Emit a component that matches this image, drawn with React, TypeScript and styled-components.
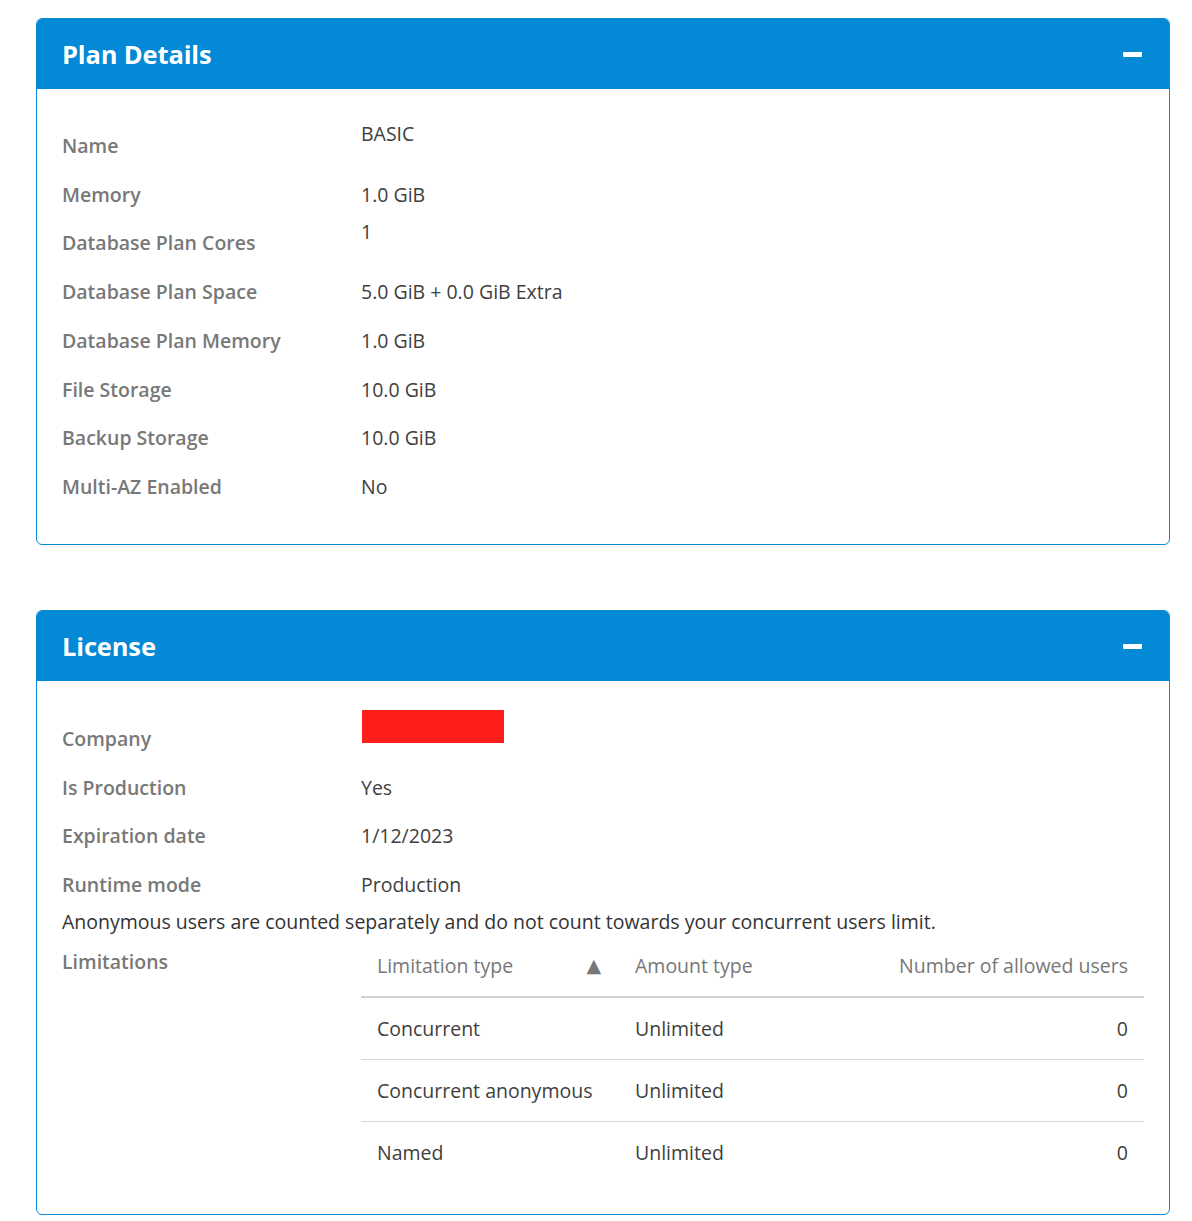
import React from "react";
import styled, { createGlobalStyle } from "styled-components";

const Global = createGlobalStyle`
  html, body { margin: 0; padding: 0; background: #fff; }
  body { font-family: "Open Sans", "Noto Sans", sans-serif; -webkit-font-smoothing: antialiased; }
  * { box-sizing: border-box; }
`;

const Page = styled.div`
  padding: 18px 22px 6px 36px;
  display: flex;
  flex-direction: column;
  gap: 65px;
`;

const Panel = styled.section`
  border: 1px solid #0b8ad5;
  border-radius: 6px;
  overflow: hidden;
  background: #fff;
`;

const Header = styled.header`
  height: 70px;
  background: #0389d5;
  display: flex;
  align-items: center;
  justify-content: space-between;
  padding: 0 27px 0 25px;
`;

const Title = styled.h2`
  margin: 0;
  color: #fff;
  font-size: 25.5px;
  font-weight: 700;
  letter-spacing: -0.15px;
`;

const Collapse = styled.span`
  width: 19px;
  height: 5px;
  background: #fff;
  border-radius: 1px;
`;

const Body = styled.div<{ $top: number; $bottom: number }>`
  padding: ${(p) => p.$top}px 25px ${(p) => p.$bottom}px 25px;
`;

const Row = styled.div`
  display: flex;
  align-items: center;
  min-height: 48.75px;
`;

const Label = styled.div<{ $top?: boolean }>`
  width: 299px;
  flex: none;
  color: #787878;
  font-size: 19.5px;
  font-weight: 600;
  line-height: 25px;
  align-self: ${(p) => (p.$top ? "flex-start" : "center")};
  margin-top: ${(p) => (p.$top ? "15px" : "0")};
`;

const Value = styled.div<{ $raised?: boolean }>`
  color: #404040;
  font-size: 19.5px;
  line-height: 25px;
  align-self: ${(p) => (p.$raised ? "flex-start" : "center")};
`;

const Redacted = styled.div`
  width: 142px;
  height: 33px;
  margin-left: 1px;
  background: #ff1f1a;
  align-self: flex-start;
  margin-top: -4px;
`;

const Note = styled.p`
  margin: 0;
  color: #333;
  font-size: 19.5px;
  line-height: 25px;
`;

const Table = styled.table`
  flex: 1;
  border-collapse: collapse;
  table-layout: fixed;
  font-size: 19.5px;
`;

const Col = styled.col<{ $w?: number }>`
  width: ${(p) => (p.$w ? `${p.$w}px` : "auto")};
`;

const Th = styled.th<{ $right?: boolean }>`
  text-align: ${(p) => (p.$right ? "right" : "left")};
  font-weight: 400;
  color: #777;
  height: 63px;
  padding: 0 16px 0;
  border-bottom: 2px solid #d0d0d0;
  line-height: 25px;
`;

const HeadInner = styled.div`
  display: flex;
  align-items: center;
  justify-content: space-between;
`;

const SortArrow = styled.span`
  font-size: 19px;
  color: #777;
  margin-right: 2px;
  font-family: "DejaVu Sans", sans-serif;
`;

const Td = styled.td<{ $right?: boolean }>`
  text-align: ${(p) => (p.$right ? "right" : "left")};
  color: #404040;
  height: 62px;
  padding: 0 16px;
  line-height: 25px;
`;

const Tr = styled.tr`
  & + & td { border-top: 1px solid #d8d8d8; }
`;

const planRows: { label: string; value: string; raised?: boolean }[] = [
  { label: "Name", value: "BASIC", raised: true },
  { label: "Memory", value: "1.0 GiB" },
  { label: "Database Plan Cores", value: "1", raised: true },
  { label: "Database Plan Space", value: "5.0 GiB + 0.0 GiB Extra" },
  { label: "Database Plan Memory", value: "1.0 GiB" },
  { label: "File Storage", value: "10.0 GiB" },
  { label: "Backup Storage", value: "10.0 GiB" },
  { label: "Multi-AZ Enabled", value: "No" },
];

const limits = [
  ["Concurrent", "Unlimited", "0"],
  ["Concurrent anonymous", "Unlimited", "0"],
  ["Named", "Unlimited", "0"],
];

export default function App() {
  return (
    <>
      <Global />
      <Page>
        <Panel>
          <Header>
            <Title>Plan Details</Title>
            <Collapse />
          </Header>
          <Body $top={32} $bottom={33}>
            {planRows.map((r) => (
              <Row key={r.label}>
                <Label>{r.label}</Label>
                <Value $raised={r.raised}>{r.value}</Value>
              </Row>
            ))}
          </Body>
        </Panel>
        <Panel>
          <Header>
            <Title>License</Title>
            <Collapse />
          </Header>
          <Body $top={33} $bottom={31}>
            <Row>
              <Label>Company</Label>
              <Redacted />
            </Row>
            <Row>
              <Label>Is Production</Label>
              <Value>Yes</Value>
            </Row>
            <Row>
              <Label>Expiration date</Label>
              <Value>1/12/2023</Value>
            </Row>
            <Row>
              <Label>Runtime mode</Label>
              <Value>Production</Value>
            </Row>
            <Note>
              Anonymous users are counted separately and do not count towards your concurrent users limit.
            </Note>
            <Row>
              <Label $top>Limitations</Label>
              <Table>
                <colgroup>
                  <Col $w={258} />
                  <Col $w={264} />
                  <Col />
                </colgroup>
                <thead>
                  <tr>
                    <Th>
                      <HeadInner>
                        <span>Limitation type</span>
                        <SortArrow>▲</SortArrow>
                      </HeadInner>
                    </Th>
                    <Th>Amount type</Th>
                    <Th $right>Number of allowed users</Th>
                  </tr>
                </thead>
                <tbody>
                  {limits.map((l) => (
                    <Tr key={l[0]}>
                      <Td>{l[0]}</Td>
                      <Td>{l[1]}</Td>
                      <Td $right>{l[2]}</Td>
                    </Tr>
                  ))}
                </tbody>
              </Table>
            </Row>
          </Body>
        </Panel>
      </Page>
    </>
  );
}
